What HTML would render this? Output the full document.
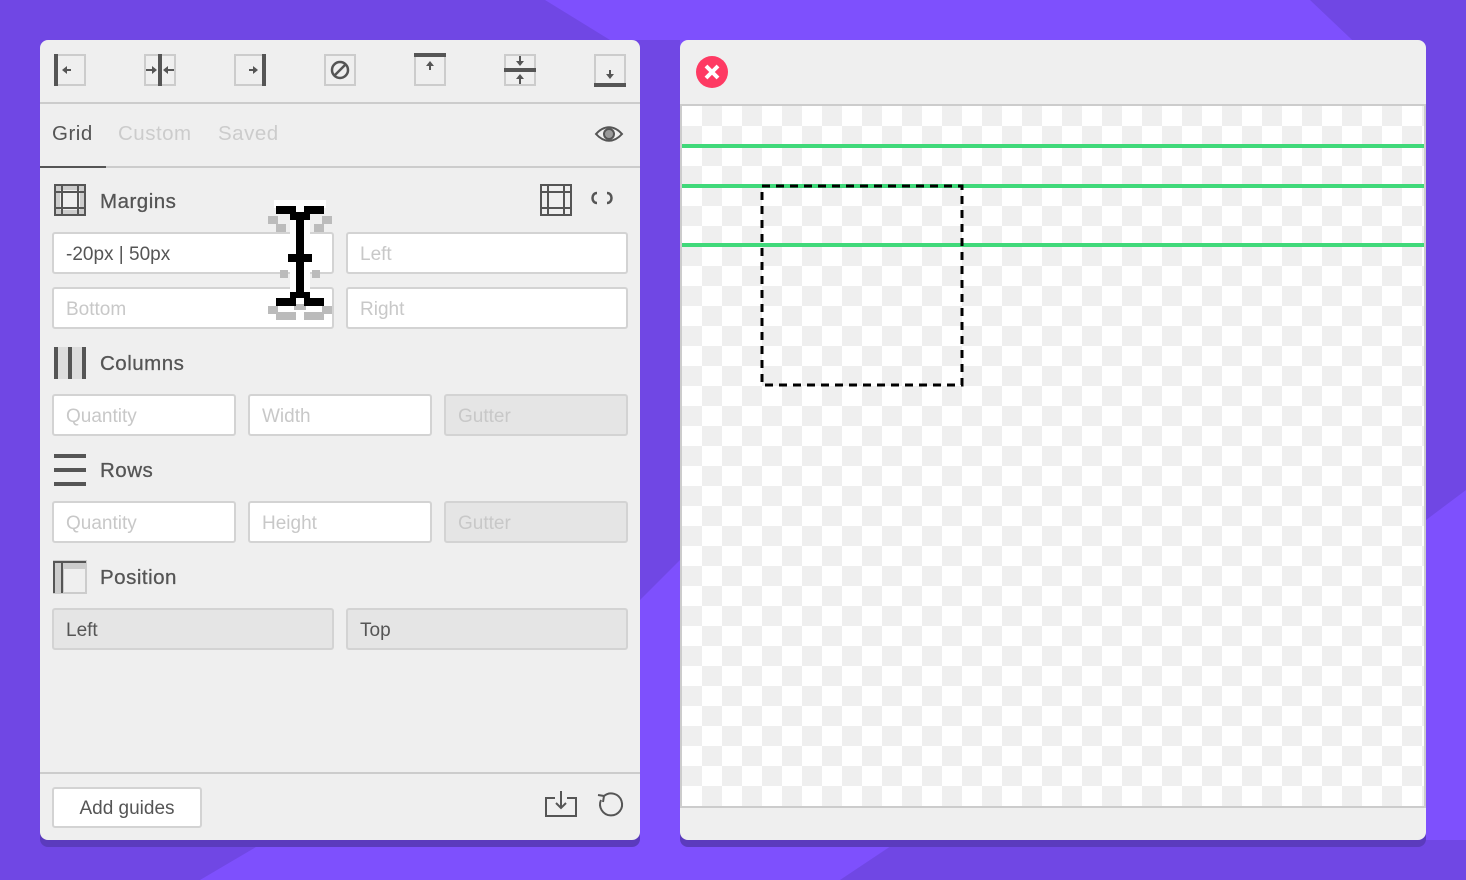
<!DOCTYPE html>
<html><head><meta charset="utf-8"><style>
*{box-sizing:border-box;margin:0;padding:0}
body{width:1466px;height:880px;overflow:hidden;position:relative;background:#7e50fd;font-family:"Liberation Sans",sans-serif}
.bg{position:absolute;left:0;top:0}
.panel{position:absolute;background:#efefef;border-radius:8px;box-shadow:0 7px 0 #5b3bbd}
.ic{position:absolute}
.in{position:absolute;height:42px;border:2px solid #d3d3d3;border-radius:3px;background:#fff;font-size:19px;color:#c8c8c8;padding:11px 12px 7px;line-height:20px}
.in.g{background:#e5e5e5}
.in.d{color:#555}
.lbl{position:absolute;left:100px;font-size:20.5px;color:#555;letter-spacing:.5px;-webkit-text-stroke:.3px #555}
.tab{position:absolute;top:82px;font-size:20.5px;letter-spacing:.5px}
</style></head><body>
<svg class="bg" width="1466" height="880">
<polygon points="0,0 545,0 610,40 680,40 680,560 590,650 200,880 0,880" fill="#7047e4"/>
<polygon points="1310,0 1466,0 1466,490 1426,520 1426,110" fill="#7047e4"/>
<polygon points="840,880 900,840 1466,840 1466,880" fill="#7047e4"/>
</svg>

<div class="panel" style="left:40px;top:40px;width:600px;height:800px">
<svg class="ic" style="left:0;top:0" width="600" height="140" fill="none">
<g stroke="#ccc" stroke-width="2">
<rect x="15" y="15" width="30" height="30"/><rect x="105" y="15" width="30" height="30"/><rect x="195" y="15" width="30" height="30"/><rect x="285" y="15" width="30" height="30"/><rect x="375" y="15" width="30" height="30"/><rect x="465" y="15" width="30" height="30"/><rect x="555" y="15" width="30" height="30"/>
</g>
<g fill="#555">
<rect x="14" y="14" width="4" height="32"/><path d="M22 30l5-4v8z"/><rect x="26" y="29" width="5" height="2"/>
<rect x="118" y="14" width="4" height="32"/><path d="M117 30l-5-4v8zM123 30l5-4v8z"/><rect x="106" y="29" width="6" height="2"/><rect x="128" y="29" width="6" height="2"/>
<rect x="222" y="14" width="4" height="32"/><path d="M218 30l-5-4v8z"/><rect x="209" y="29" width="5" height="2"/>
<rect x="374" y="13" width="32" height="4"/><path d="M390 21l-4 5h8z"/><rect x="389" y="25" width="2" height="5"/>
<rect x="464" y="28" width="32" height="4"/><path d="M480 26l-4-5h8zM480 34l-4 5h8z"/><rect x="479" y="16" width="2" height="6"/><rect x="479" y="38" width="2" height="6"/>
<rect x="554" y="43" width="32" height="4"/><path d="M570 39l-4-5h8z"/><rect x="569" y="30" width="2" height="5"/>
</g>
<circle cx="300" cy="30" r="8" stroke="#555" stroke-width="2.5"/><path d="M295 35l10-10" stroke="#555" stroke-width="2.5"/>
<path d="M0 63h600" stroke="#ccc" stroke-width="2"/>
<path d="M0 127h600" stroke="#ccc" stroke-width="2"/><path d="M0 127h66" stroke="#555" stroke-width="2"/>
<path d="M556 94c8-9 18-9 26 0c-8 9-18 9-26 0z" stroke="#555" stroke-width="2"/><circle cx="569" cy="94" r="5" stroke="#555" stroke-width="2" fill="#999"/>
</svg>
<div class="tab" style="left:12px;color:#555">Grid</div>
<div class="tab" style="left:78px;color:#ccc">Custom</div>
<div class="tab" style="left:178px;color:#ccc">Saved</div>

<svg class="ic" style="left:0;top:140px" width="600" height="420" fill="none">
<rect x="14" y="4" width="32" height="32" fill="#ccc"/><rect x="20" y="10" width="20" height="20" fill="#efefef"/>
<g stroke="#555" stroke-width="2"><rect x="15" y="5" width="30" height="30"/><path d="M22 5v30M38 5v30M15 12h30M15 28h30"/>
<rect x="501" y="5" width="30" height="30"/><path d="M508 5v30M524 5v30M501 12h30M501 28h30"/>
<path d="M557 13c-6 0-6 10 0 10M567 13c6 0 6 10 0 10" stroke-width="2.5"/></g>
<rect x="14" y="167" width="32" height="32" fill="#ddd"/>
<g fill="#555"><rect x="14" y="167" width="4" height="32"/><rect x="28" y="167" width="4" height="32"/><rect x="42" y="167" width="4" height="32"/>
<rect x="14" y="274" width="32" height="4"/><rect x="14" y="288" width="32" height="4"/><rect x="14" y="302" width="32" height="4"/></g>
<rect x="14" y="381" width="32" height="32" fill="#efefef" stroke="#ccc" stroke-width="2"/><rect x="14" y="381" width="10" height="32" fill="#ccc"/><rect x="14" y="381" width="32" height="8" fill="#ccc"/>
<path d="M14 381v32M22 381v32M14 382h32" stroke="#555" stroke-width="2"/>
</svg>
<div class="lbl" style="left:60px;top:150px">Margins</div>
<div class="lbl" style="left:60px;top:312px">Columns</div>
<div class="lbl" style="left:60px;top:419px">Rows</div>
<div class="lbl" style="left:60px;top:526px">Position</div>

<div class="in d" style="left:12px;top:192px;width:282px">-20px | 50px</div>
<div class="in" style="left:306px;top:192px;width:282px">Left</div>
<div class="in" style="left:12px;top:247px;width:282px">Bottom</div>
<div class="in" style="left:306px;top:247px;width:282px">Right</div>
<div class="in" style="left:12px;top:354px;width:184px">Quantity</div>
<div class="in" style="left:208px;top:354px;width:184px">Width</div>
<div class="in g" style="left:404px;top:354px;width:184px">Gutter</div>
<div class="in" style="left:12px;top:461px;width:184px">Quantity</div>
<div class="in" style="left:208px;top:461px;width:184px">Height</div>
<div class="in g" style="left:404px;top:461px;width:184px">Gutter</div>
<div class="in g d" style="left:12px;top:568px;width:282px">Left</div>
<div class="in g d" style="left:306px;top:568px;width:282px">Top</div>

<svg class="ic" style="left:228px;top:160px" width="66" height="122">
<g fill="#bbb"><rect x="0" y="16" width="10" height="8"/><rect x="54" y="16" width="10" height="8"/><rect x="8" y="24" width="10" height="8"/><rect x="46" y="24" width="10" height="8"/>
<rect x="12" y="70" width="8" height="8"/><rect x="44" y="70" width="8" height="8"/><rect x="0" y="106" width="10" height="8"/><rect x="54" y="106" width="10" height="8"/><rect x="8" y="112" width="20" height="8"/><rect x="36" y="112" width="20" height="8"/><rect x="26" y="104" width="12" height="6"/></g>
<g fill="#fff"><rect x="6" y="0" width="52" height="8"/><rect x="22" y="8" width="20" height="92"/></g>
<g fill="#000"><rect x="8" y="6" width="20" height="8"/><rect x="36" y="6" width="20" height="8"/><rect x="22" y="12" width="20" height="8"/><rect x="28" y="16" width="8" height="78"/><rect x="20" y="54" width="24" height="8"/>
<rect x="22" y="92" width="20" height="6"/><rect x="8" y="98" width="20" height="8"/><rect x="36" y="98" width="20" height="8"/></g>
</svg>

<div style="position:absolute;left:0;top:732px;width:600px;height:2px;background:#ccc"></div>
<div style="position:absolute;left:12px;top:747px;width:150px;height:41px;background:#fff;border:2px solid #d3d3d3;border-radius:3px;font-size:19px;color:#555;text-align:center;line-height:39px">Add guides</div>
<svg class="ic" style="left:500px;top:748px" width="100" height="40" fill="none" stroke="#555" stroke-width="2">
<path d="M15 10h-9v18h30v-18h-9"/><path d="M21 3v17M16 15l5 5l5-5"/>
<path d="M64 8a11 11 0 1 1-3 4"/><path d="M58 7l6 1l-1 6"/>
</svg>
</div>

<div class="panel" style="left:680px;top:40px;width:746px;height:800px;overflow:hidden">
<svg class="ic" style="left:0;top:0" width="746" height="800">
<defs><pattern id="ck" x="2" y="66" width="40" height="40" patternUnits="userSpaceOnUse"><rect width="40" height="40" fill="#fff"/><rect x="20" width="20" height="20" fill="#efefef"/><rect y="20" width="20" height="20" fill="#efefef"/></pattern></defs>
<circle cx="32" cy="32" r="16" fill="#fe3a63"/><path d="M26 26l12 12M38 26l-12 12" stroke="#fff" stroke-width="4"/>
<rect x="1" y="65" width="744" height="702" fill="url(#ck)" stroke="#ccc" stroke-width="2"/>
<g fill="#40d97a"><rect x="2" y="104" width="742" height="4"/><rect x="2" y="144" width="742" height="4"/><rect x="2" y="203" width="742" height="4"/></g>
<rect x="82" y="146" width="200" height="199" fill="none" stroke="#000" stroke-width="3" stroke-dasharray="8,6"/>
</svg>
</div>
</body></html>
